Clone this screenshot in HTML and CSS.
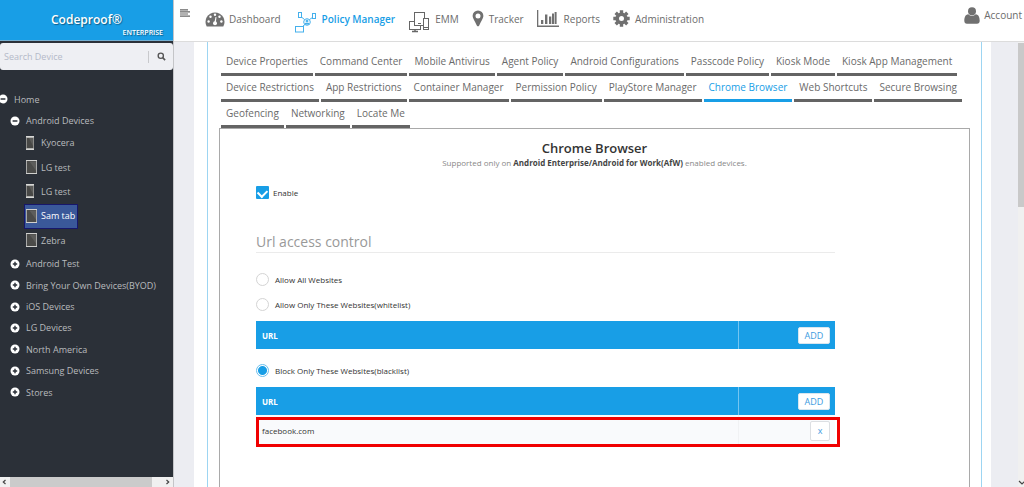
FILE: index.html
```html
<!DOCTYPE html>
<html lang="en">
<head>
<meta charset="utf-8">
<title>Codeproof - Policy Manager</title>
<link rel="stylesheet" href="styles.css">
</head>
<body>
<svg class="defs" aria-hidden="true">
  <symbol id="plus" viewBox="0 0 10 10"><circle cx="5" cy="5" r="4.500" fill="#fff"/><path d="M5 2.800v4.400M2.800 5h4.400" stroke="#2b3038" stroke-width="1.400"/></symbol>
  <symbol id="minus" viewBox="0 0 10 10"><circle cx="5" cy="5" r="4.500" fill="#fff"/><path d="M2.600 5h4.800" stroke="#2b3038" stroke-width="1.500"/></symbol>
  <symbol id="phone" viewBox="0 0 11 14"><rect x="0" y="0" width="8" height="14" fill="#8c8c8a"/><path d="M0 0h8v1.600H0zM0 12.400h8V14H0z" fill="#d8d8d6"/><rect x="1" y="2" width="6" height="10" fill="#484846"/><path d="M3 2h4v8z" fill="#5c5c5a"/></symbol>
  <symbol id="tablet" viewBox="0 0 11 14"><rect x=".5" y=".5" width="10" height="13" fill="#4b4b49" stroke="#a9a9a8"/><path d="M0 .5h11M0 13.500h11" stroke="#d0d0ce"/><path d="M3.500 1.500H10v9z" fill="#5d5d5b"/></symbol>
</svg>

<aside class="sidebar">
  <div class="brand">
    <span class="brand-name">Codeproof®</span>
    <span class="brand-edition">ENTERPRISE</span>
  </div>
  <form class="search">
    <input type="text" placeholder="Search Device" aria-label="Search Device">
    <button type="button" aria-label="Search"><svg viewBox="0 0 10 10"><circle cx="4.200" cy="4.200" r="2.900" fill="none" stroke="#555" stroke-width="1.500"/><path d="M6.300 6.300 9 9" stroke="#555" stroke-width="1.800"/></svg></button>
  </form>
  <nav class="tree" aria-label="Devices">
    <a class="node root" href="#"><svg><use href="#minus"/></svg>Home</a>
    <a class="node" href="#"><svg><use href="#minus"/></svg>Android Devices</a>
    <div class="devices">
      <a href="#"><svg><use href="#phone"/></svg>Kyocera</a>
      <a href="#"><svg><use href="#tablet"/></svg>LG test</a>
      <a href="#"><svg><use href="#phone"/></svg>LG test</a>
      <a href="#" class="selected"><svg><use href="#tablet"/></svg>Sam tab</a>
      <a href="#"><svg><use href="#tablet"/></svg>Zebra</a>
    </div>
    <div class="groups">
      <a class="node" href="#"><svg><use href="#plus"/></svg>Android Test</a>
      <a class="node" href="#"><svg><use href="#plus"/></svg>Bring Your Own Devices(BYOD)</a>
      <a class="node" href="#"><svg><use href="#plus"/></svg>iOS Devices</a>
      <a class="node" href="#"><svg><use href="#plus"/></svg>LG Devices</a>
      <a class="node" href="#"><svg><use href="#plus"/></svg>North America</a>
      <a class="node" href="#"><svg><use href="#plus"/></svg>Samsung Devices</a>
      <a class="node" href="#"><svg><use href="#plus"/></svg>Stores</a>
    </div>
  </nav>
  <div class="hscroll">
    <svg viewBox="0 0 10 10"><path d="M5.500 3 3.300 5l2.200 2" /></svg>
    <span class="thumb"></span>
    <svg viewBox="0 0 10 10"><path d="M3.500 3 5.700 5 3.500 7"/></svg>
  </div>
</aside>

<div class="page">
  <header class="topbar">
    <button class="menu" type="button" aria-label="Toggle menu"><svg viewBox="0 0 10 8"><path d="M0 .8h8M0 2.900h10M0 5h8M0 7.100h10" stroke="#666" stroke-width="1.200"/></svg></button>
    <nav class="mainnav">
      <a href="#" class="dash"><svg width="20" height="16" viewBox="0 0 20 16"><path d="M1.700 15.500A9.500 9.500 0 1 1 18.300 15.500z" fill="#707070"/><g fill="#fff"><circle cx="3.600" cy="10.500" r="1.200"/><circle cx="5.500" cy="5.800" r="1.200"/><circle cx="10" cy="3.800" r="1.200"/><circle cx="14.500" cy="5.800" r="1.200"/><circle cx="16.400" cy="10.500" r="1.200"/><circle cx="10" cy="12.300" r="2"/><path d="m9.300 12 1.200-6 1 .2-.8 6z"/></g></svg>Dashboard</a>
      <a href="#" class="policy active"><svg width="22" height="22" viewBox="0 0 22 22" fill="none" stroke="#45b0ec"><rect x="3.500" y="1.500" width="3" height="5"/><rect x="17.500" y="2.500" width="3" height="5"/><rect x=".5" y="15.500" width="8" height="5.500"/><path d="m7 6.500 2.500 2M17.500 6.500 14.500 8.500M8 15l2-1.500"/><circle cx="12" cy="11" r="3.300"/><circle cx="12" cy="10" r="1" fill="#45b0ec"/><path d="M10 12.700h4" stroke-width="1.700"/></svg>Policy Manager</a>
      <a href="#" class="emm"><svg width="22" height="22" viewBox="0 0 22 22" fill="#fff" stroke="#666"><rect x="1.500" y="10.500" width="11" height="8"/><path d="M7 18.500v2M4 20.500h6" stroke-width="1.400"/><rect x="6.500" y="1.500" width="10" height="13"/><path d="M10 12.500h3"/><rect x="15.500" y="7.500" width="5" height="11"/><path d="M15.500 16.500h5"/></svg>EMM</a>
      <a href="#" class="tracker"><svg width="12" height="17" viewBox="0 0 12 17"><path d="M6 .5a5.400 5.400 0 0 0-5.400 5.400C.6 8 3 11 4.800 15.500q1.200 1.700 2.400 0C9 11 11.400 8 11.400 5.900A5.400 5.400 0 0 0 6 .5m0 2.900a2.500 2.500 0 1 1 0 5 2.500 2.500 0 0 1 0-5" fill="#707070"/></svg>Tracker</a>
      <a href="#" class="reports"><svg width="22" height="17" viewBox="0 0 22 17" fill="#707070"><path d="M0 0h1.300v15.500H22V17H0zM4 10h2.300v4H4zM8 4.500h2.400V14H8zM12 6.500h2.300V14H12zM15 3.500h2V14h-2zM17.600 2h2V14h-2z"/></svg>Reports</a>
      <a href="#" class="admin"><svg width="17" height="17" viewBox="0 0 17 17"><circle cx="8.500" cy="8.500" r="4.300" fill="none" stroke="#707070" stroke-width="3.600"/><g stroke="#707070" stroke-width="3.400"><path d="M8.500 .3v3M8.500 13.700v3M.3 8.500h3M13.700 8.500h3M2.700 2.700l2 2M12.300 12.300l2 2M2.700 14.300l2-2M12.300 4.700l2-2"/></g></svg>Administration</a>
    </nav>
    <a href="#" class="account"><svg width="16" height="17" viewBox="0 0 16 17" fill="#707070"><circle cx="8" cy="4.200" r="4"/><path d="M4.300 7.200C1.200 7.500.3 10.500.3 13.800c0 1.900 1 3 2.700 3h10c1.700 0 2.700-1.100 2.700-3 0-3.300-.9-6.300-4-6.600a5.300 5.300 0 0 1-7.400 0"/></svg>Account</a>
  </header>

  <div class="body">
    <main class="card">
      <div class="frame">
        <nav class="tabs">
          <a href="#">Device Properties</a>
          <a href="#">Command Center</a>
          <a href="#">Mobile Antivirus</a>
          <a href="#">Agent Policy</a>
          <a href="#">Android Configurations</a>
          <a href="#">Passcode Policy</a>
          <a href="#">Kiosk Mode</a>
          <a href="#">Kiosk App Management</a>
          <a href="#">Device Restrictions</a>
          <a href="#">App Restrictions</a>
          <a href="#">Container Manager</a>
          <a href="#">Permission Policy</a>
          <a href="#">PlayStore Manager</a>
          <a href="#" class="current">Chrome Browser</a>
          <a href="#">Web Shortcuts</a>
          <a href="#">Secure Browsing</a>
          <a href="#">Geofencing</a>
          <a href="#">Networking</a>
          <a href="#">Locate Me</a>
        </nav>
        <section class="panel">
          <h1>Chrome Browser</h1>
          <p class="note">Supported only on <b>Android Enterprise/Android for Work(AfW)</b> enabled devices.</p>
          <form class="settings">
            <label class="option enable"><input type="checkbox" checked>Enable</label>
            <h2>Url access control</h2>
            <label class="option"><input type="radio" name="access">Allow All Websites</label>
            <label class="option"><input type="radio" name="access">Allow Only These Websites(whitelist)</label>
            <table>
              <thead><tr><th>URL</th><th class="action"><button type="button">ADD</button></th></tr></thead>
            </table>
            <label class="option block"><input type="radio" name="access" checked>Block Only These Websites(blacklist)</label>
            <div class="blacklist">
              <table>
                <thead><tr><th>URL</th><th class="action"><button type="button">ADD</button></th></tr></thead>
                <tbody><tr><td>facebook.com</td><td class="action"><button type="button" class="remove">x</button></td></tr></tbody>
              </table>
              <span class="highlight"></span>
            </div>
          </form>
        </section>
      </div>
    </main>
    <div class="vscroll">
      <span class="thumb"></span>
      <svg viewBox="0 0 6 10"><path d="m1 4 3 3 3-3"/></svg>
    </div>
  </div>
</div>
</body>
</html>
```
FILE: styles.css
```css
* { box-sizing: border-box; }

body {
  margin: 0;
  height: 100vh;
  display: flex;
  overflow: hidden;
  font-family: "Open Sans", "Noto Sans", sans-serif;
  font-size: 8px;
  color: #333;
  background: #fff;
}

a { color: inherit; text-decoration: none; }
button, input { font: inherit; color: inherit; margin: 0; }
svg { flex: none; }
.defs { position: absolute; width: 0; height: 0; }

/* Sidebar */
.sidebar {
  flex: none;
  width: 174px;
  display: flex;
  flex-direction: column;
  background: #2b3038;
  border-right: 1px solid #c4c5c8;
}

.brand {
  height: 41px;
  padding: 11px 10px 0 0;
  display: flex;
  flex-direction: column;
  background: #189ee6;
  border-bottom: 1px solid #74aed0;
  color: #fff;
  text-shadow: 1px 1px 1px rgba(0, 0, 0, .4);
}
.brand-name { padding-left: 10px; font-size: 12px; line-height: 18px; font-weight: 600; text-align: center; }
.brand-edition { font-size: 7px; line-height: 8px; font-weight: 600; text-align: right; }

.search {
  margin-top: 2px;
  height: 27px;
  display: flex;
  align-items: center;
  background: #eeeff3;
  border-radius: 3px;
}
.search input {
  flex: 1;
  min-width: 0;
  padding: 0 4px;
  border: 0;
  border-right: 1px solid #c8c9cc;
  background: none;
  font-size: 9px;
  line-height: 12px;
}
.search input::placeholder { color: #b4b9c8; opacity: 1; }
.search button { width: 24px; padding: 0; border: 0; background: none; display: flex; justify-content: center; }
.search svg { width: 9px; height: 9px; }

.tree { flex: 1; padding-top: 18px; font-size: 9px; color: #b9bbbe; }
.node { height: 21px; padding-left: 10px; display: flex; align-items: center; gap: 6px; }
.node svg { width: 10px; height: 10px; }
.root { padding-left: 0; height: 22px; }
.root svg { margin-left: -2px; }
.devices { min-height: 122px; padding-left: 24px; display: grid; grid-auto-rows: 1fr; justify-items: start; }
.devices a { padding: 0 2px 1px 1px; display: flex; align-items: center; gap: 4px; border: 1px solid transparent; }
.devices svg { width: 11px; height: 14px; }
.devices .selected { background: #3a5899; border-color: #17176a; color: #fff; }
.groups { min-height: 150px; display: grid; grid-auto-rows: 1fr; }
.groups .node { height: auto; }

.hscroll { height: 10px; display: flex; background: #f0f0f0; }
.hscroll svg { width: 10px; height: 10px; }
.hscroll .thumb { flex: 1; margin-right: 11px; background: #cbcbcb; }
.hscroll path, .vscroll path { fill: none; stroke: #444; stroke-width: 1.2; }

/* Top bar */
.page { flex: 1; min-width: 0; display: flex; flex-direction: column; }
.topbar {
  height: 42px;
  padding-right: 2px;
  display: flex;
  border-bottom: 1px solid #dcdcdc;
  font-size: 10px;
  color: #6c6c6c;
}
.menu { width: 31px; height: 26px; padding: 0 0 0 6px; border: 0; background: none; display: flex; align-items: center; }
.menu svg { width: 10px; height: 8px; }
.mainnav { flex: 1; display: flex; }
.mainnav a { height: 37px; display: flex; align-items: center; gap: 5px; margin-right: 13px; }
.mainnav .dash { gap: 4px; margin-right: 14px; }
.mainnav .emm { gap: 5px; }
.mainnav .policy svg, .mainnav .emm svg { margin-top: 7px; }
.mainnav .active { color: #189ee6; font-weight: 600; }
.account { height: 30px; display: flex; align-items: center; gap: 4px; }

/* Content */
.body { flex: 1; min-height: 0; display: flex; background: #ecedf2; }
.card { flex: 1; min-width: 0; margin: 0 27px 0 20px; padding: 0 9px 0 13px; display: flex; background: #fff; }
.frame {
  flex: 1;
  min-width: 0;
  padding: 8px 11px 0;
  display: flex;
  flex-direction: column;
  border: solid #9dd5f2;
  border-width: 0 1px;
}
.vscroll {
  width: 6px;
  padding-top: 1px;
  display: flex;
  flex-direction: column;
  justify-content: space-between;
  background: #f0f0f0;
}
.vscroll .thumb { height: 37%; background: #c9c9c9; }
.vscroll svg { width: 6px; height: 10px; }

.tabs { padding-left: 2px; display: flex; flex-wrap: wrap; column-gap: 2px; font-size: 10px; color: #6a6a6a; }
.tabs a { padding: 0 5px; line-height: 23px; border-bottom: 3px solid #646464; }
.tabs .current { color: #189ee6; border-color: #189ee6; }

.panel { flex: 1; padding-top: 10px; border: solid #a9a9a9; border-width: 1px 1px 0; }
h1 { margin: 0; font-size: 13px; line-height: 18px; font-weight: 600; text-align: center; color: #333; }
.note { margin: 0; line-height: 12px; text-align: center; color: #888; }
.note b { color: #444; }

.settings { padding: 16px 134px 0 36px; }
.option { height: 25px; display: flex; align-items: center; gap: 6px; }
.option input {
  appearance: none;
  width: 13px;
  height: 13px;
  border: 1px solid #d4d4d4;
  border-radius: 50%;
  background: #fff;
}
.option input:checked { border-color: #6abfee; background: radial-gradient(circle, #189ee6 4px, #fff 5px); }
.option.enable { gap: 4px; height: 14px; }
.option.enable input {
  border: 0;
  border-radius: 1px;
  background: #189ee6;
  display: grid;
  place-items: center;
}
.option.enable input::after {
  content: "";
  width: 7px;
  height: 5px;
  border: solid #fff;
  border-width: 0 0 2px 2px;
  transform: rotate(-45deg);
}
h2 {
  margin: 33px 0 14px;
  padding-bottom: 1px;
  border-bottom: 1px solid #ebebeb;
  font-size: 14px;
  line-height: 19px;
  font-weight: 400;
  color: #999;
}

table { width: 100%; margin-top: 4px; border-collapse: collapse; text-align: left; }
th, td { height: 28px; padding: 0 6px; }
th { background: #189ee6; color: #fff; font-weight: 700; }
th.action { border-left: 1px solid #74c5f1; }
td { height: 31px; background: #f9fafc; }
td.action { border-left: 1px solid #f1f2f4; }
.action { width: 97px; padding-right: 5px; text-align: right; }
.action button {
  width: 32px;
  height: 17px;
  padding: 0;
  border: 1px solid #d8e6ef;
  border-radius: 2px;
  background: #fff;
  color: #3d9be0;
  font-size: 9px;
  line-height: 15px;
  font-weight: 400;
}
.action .remove { width: 20px; height: 20px; border-color: #dcdfe3; }
.block { margin-top: 9px; }
.blacklist { position: relative; }
.highlight { position: absolute; inset: 30px -5px -1px 0; border: 3px solid #f00000; pointer-events: none; }
```
